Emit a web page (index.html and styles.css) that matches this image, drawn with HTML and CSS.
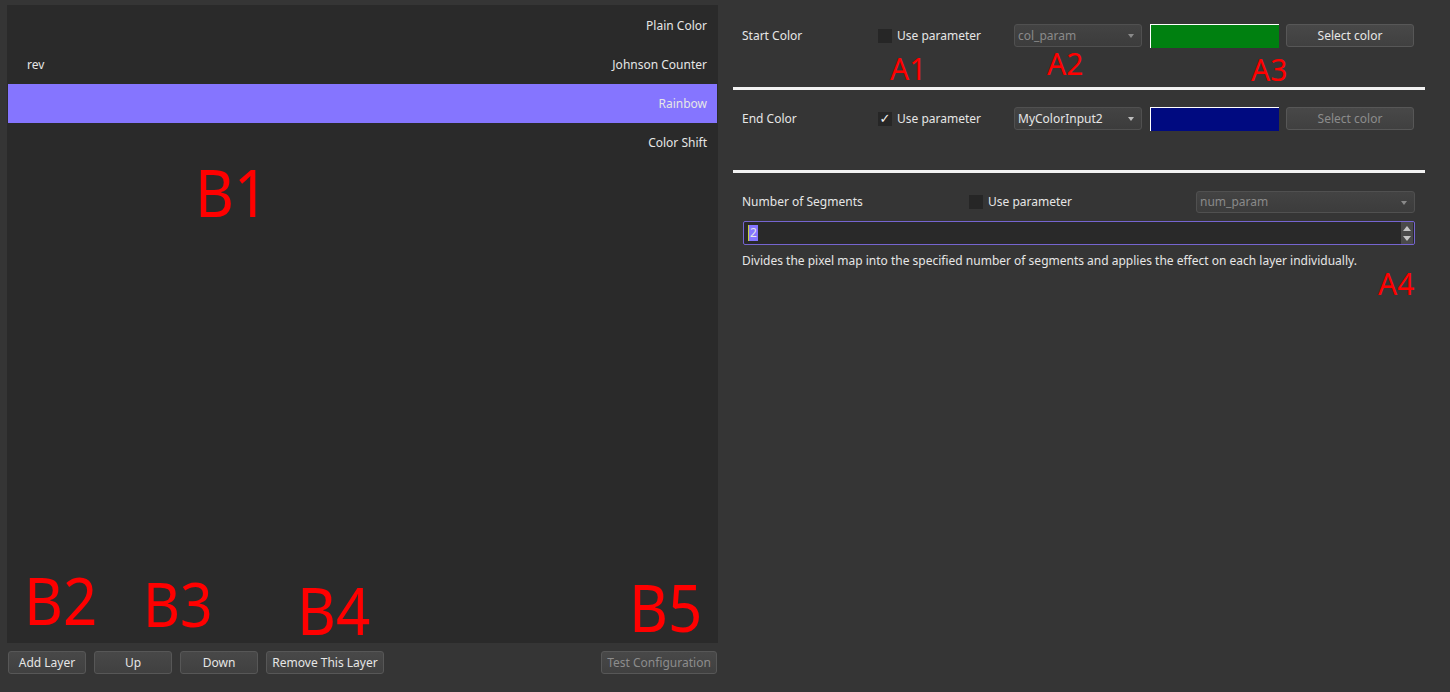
FILE: index.html
```html
<!DOCTYPE html>
<html lang="en">
<head>
<meta charset="UTF-8" />
<title>Layer Editor</title>
<link rel="stylesheet" href="styles.css">
</head>
<body>
<div class="app">
  <div class="left">
    <ul class="layers">
      <li class="layer"><span class="layer-name"></span><span class="layer-type">Plain Color</span></li>
      <li class="layer"><span class="layer-name">rev</span><span class="layer-type">Johnson Counter</span></li>
      <li class="layer selected"><span class="layer-name"></span><span class="layer-type">Rainbow</span></li>
      <li class="layer"><span class="layer-name"></span><span class="layer-type">Color Shift</span></li>
    </ul>
    <div class="actions">
      <button class="btn w-78">Add Layer</button>
      <button class="btn w-78">Up</button>
      <button class="btn w-78">Down</button>
      <button class="btn w-118">Remove This Layer</button>
      <span class="spacer"></span>
      <button class="btn w-116" disabled>Test Configuration</button>
    </div>
  </div>

  <div class="right">
    <div class="row grid5">
      <span class="label">Start Color</span>
      <label class="check"><span class="box"></span>Use parameter</label>
      <div class="combo disabled"><span>col_param</span><span class="arrow"></span></div>
      <div class="swatch green"></div>
      <button class="btn">Select color</button>
    </div>
    <div class="sep first"></div>

    <div class="row grid5 second">
      <span class="label">End Color</span>
      <label class="check"><span class="box">&#10003;</span>Use parameter</label>
      <div class="combo"><span>MyColorInput2</span><span class="arrow"></span></div>
      <div class="swatch navy"></div>
      <button class="btn" disabled>Select color</button>
    </div>
    <div class="sep"></div>

    <div class="row grid3">
      <span class="label">Number of Segments</span>
      <label class="check"><span class="box"></span>Use parameter</label>
      <div class="combo disabled"><span>num_param</span><span class="arrow"></span></div>
    </div>
    <div class="row">
      <div class="spin">
        <span class="spin-value"><span class="caret"></span><span class="sel">2</span></span>
        <span class="spin-arrows"><span class="up"></span><span class="down"></span></span>
      </div>
      <p class="desc">Divides the pixel map into the specified number of segments and applies the effect on each layer individually.</p>
    </div>
  </div>

  <!-- annotation marks -->
  <span class="mark big" style="left:195px;top:158px">B1</span>
  <span class="mark big" style="left:24px;top:566px">B2</span>
  <span class="mark mid" style="left:143px;top:572px">B3</span>
  <span class="mark big" style="left:297px;top:576px">B4</span>
  <span class="mark big" style="left:629px;top:573px">B5</span>
  <span class="mark small" style="left:890px;top:54px">A1</span>
  <span class="mark small" style="left:1047px;top:49px">A2</span>
  <span class="mark small" style="left:1251px;top:55px">A3</span>
  <span class="mark small" style="left:1378px;top:269px">A4</span>
</div>
</body>
</html>
```

FILE: styles.css
```css
html, body {
  margin: 0;
  background: #353535;
  color: #e6e6e6;
  font-family: "Noto Sans", "Open Sans", sans-serif;
  font-size: 12px;
}
.app {
  position: relative;
  display: flex;
  width: 1450px;
  height: 692px;
  overflow: hidden;
}

/* left side: layer list */
.left {
  width: 711px;
  margin: 5px 0 0 7px;
  display: flex;
  flex-direction: column;
}
.layers {
  height: 638px;
  box-sizing: border-box;
  margin: 0;
  padding: 0;
  list-style: none;
  background: #2a2a2a;
  border: 1px solid #2a2a2a;
}
.layer {
  height: 39px;
  display: flex;
  align-items: center;
  justify-content: space-between;
  padding: 0 10px 0 19px;
}
.layer.selected { background: #8575ff; }
.actions {
  display: flex;
  gap: 8px;
  margin-top: 8px;
  padding: 0 1px;
}
.spacer { flex: 1; }

.btn {
  height: 23px;
  box-sizing: border-box;
  padding: 0 4px;
  border: 1px solid #575757;
  border-radius: 3px;
  background: linear-gradient(#484848, #404040);
  color: #e6e6e6;
  font-family: inherit;
  font-size: 12px;
}
.btn:disabled { color: #8c8c8c; }
.w-78 { width: 78px; }
.w-118 { width: 118px; }
.w-116 { width: 116px; }

/* right side: parameters */
.right {
  width: 692px;
  margin-left: 15px;
  padding-top: 23px;
}
.row { padding: 0 10px 0 9px; }
.grid5 {
  display: grid;
  grid-template-columns: repeat(5, 129px);
  column-gap: 7px;
  align-items: center;
  height: 25px;
}
.grid5.second { margin-top: 16px; }
.grid3 {
  display: grid;
  grid-template-columns: repeat(3, 219px);
  column-gap: 8px;
  align-items: center;
  height: 23px;
  margin-top: 17px;
}
.grid5 .btn { width: 128px; }

.check {
  display: flex;
  align-items: center;
  gap: 5px;
}
.box {
  width: 14px;
  height: 14px;
  background: #262626;
  color: #f4f4f4;
  font-family: "DejaVu Sans", sans-serif;
  font-size: 13px;
  font-weight: bold;
  line-height: 14px;
  text-align: center;
}

.combo {
  position: relative;
  height: 23px;
  box-sizing: border-box;
  display: flex;
  align-items: center;
  padding: 0 3px;
  border: 1px solid #505050;
  border-radius: 3px;
  background: linear-gradient(#434343, #3c3c3c);
  width: 128px;
}
.grid3 .combo { width: 219px; height: 22px; }
.combo.disabled { color: #8a8a8a; }
.arrow {
  position: absolute;
  right: 7px;
  top: 9px;
  border-left: 3.5px solid transparent;
  border-right: 3.5px solid transparent;
  border-top: 4px solid #8a8a8a;
}
.combo:not(.disabled) .arrow { border-top-color: #bdbdbd; }

.swatch {
  width: 129px;
  height: 24px;
  box-sizing: border-box;
  border-top: 1px solid #ffffff;
  border-left: 1px solid #ffffff;
}
.green { background: #008010; }
.navy { background: #000a80; }

.sep {
  height: 3px;
  background: #f2f2f2;
  margin-top: 39px;
}

.spin {
  position: relative;
  margin: 8px 0 0 1px;
  height: 24px;
  box-sizing: border-box;
  border: 1px solid #7565d0;
  border-radius: 2px;
  background: #292929;
  display: flex;
  align-items: center;
  padding-left: 4px;
}
.spin-value { display: flex; align-items: center; }
.caret {
  width: 1px;
  height: 16px;
  background: #c8d040;
}
.sel {
  background: #8575ff;
  line-height: 16px;
  padding: 0 1px;
}
.spin-arrows {
  position: absolute;
  right: 1px;
  top: 0;
  bottom: 0;
  width: 12px;
  background: #4a4a4a;
  display: flex;
  flex-direction: column;
  align-items: center;
  justify-content: center;
  gap: 5px;
}
.up, .down {
  border-left: 4px solid transparent;
  border-right: 4px solid transparent;
}
.up { border-bottom: 5px solid #c4c4c4; }
.down { border-top: 5px solid #c4c4c4; }

.desc {
  margin: 8px 0 0;
  line-height: 16px;
}

/* red annotation letters */
.mark {
  position: absolute;
  color: #ff0000;
  line-height: 1;
  font-family: "Noto Sans", sans-serif;
  transform-origin: left top;
}
.big { font-size: 66px; transform: scaleX(0.91); }
.mid { font-size: 62px; transform: scaleX(0.92); }
.small { font-size: 30px; }
```
